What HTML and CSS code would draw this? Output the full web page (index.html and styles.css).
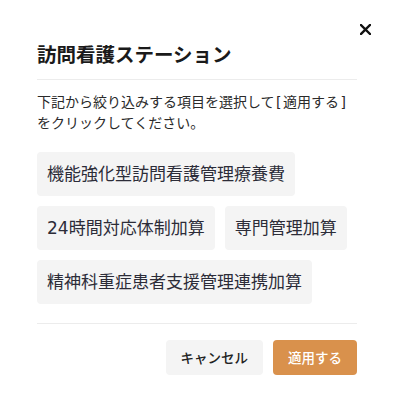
FILE: index.html
```html
<!DOCTYPE html>
<html lang="ja">
<head>
<meta charset="utf-8">
<link rel="stylesheet" href="styles.css">
</head>
<body>
<div class="modal">
  <button class="close" aria-label="閉じる">
    <svg width="11" height="11" viewBox="0 0 11 11"><path d="M1 1L10 10M10 1L1 10" stroke="#111" stroke-width="2.4" stroke-linecap="square"/></svg>
  </button>
  <h2 class="title">訪問看護ステーション</h2>
  <hr class="divider">
  <p class="desc">下記から絞り込みする項目を選択して<span class="br">[</span>適用する<span class="br">]</span><br>をクリックしてください。</p>
  <div class="chips">
    <span class="chip">機能強化型訪問看護管理療養費</span>
    <span class="chip">24時間対応体制加算</span>
    <span class="chip">専門管理加算</span>
    <span class="chip">精神科重症患者支援管理連携加算</span>
  </div>
  <hr class="divider bottom">
  <div class="actions">
    <button class="btn cancel">キャンセル</button>
    <button class="btn apply">適用する</button>
  </div>
</div>
</body>
</html>
```
FILE: styles.css
```css
html, body {
  margin: 0;
  padding: 0;
  background: #fff;
}
body {
  font-family: "Noto Sans CJK JP", "Noto Sans", sans-serif;
  color: #222;
}
.modal {
  position: relative;
  padding: 40px 36px 0 37px;
}
.close {
  position: absolute;
  top: 23px;
  right: 21px;
  width: 13px;
  height: 13px;
  padding: 1px;
  border: 0;
  background: none;
  display: flex;
  align-items: center;
  justify-content: center;
  cursor: pointer;
}
.title {
  margin: 0;
  font-size: 19.5px;
  line-height: 28px;
  font-weight: 700;
  color: #1a1a1a;
}
.divider {
  margin: 11px 0 0;
  border: 0;
  border-top: 1px solid #ececec;
  height: 0;
}
.desc {
  margin: 12px 0 0;
  font-family: "DejaVu Sans", "Noto Sans CJK JP", sans-serif;
  font-size: 14px;
  line-height: 21px;
  color: #2a2a2a;
}
.br {
  margin: 0 1.5px;
}
.chips {
  margin-top: 18px;
  display: flex;
  flex-wrap: wrap;
  gap: 10px;
}
.chip {
  background: #f4f4f4;
  border-radius: 4px;
  padding: 10px 10px;
  font-family: "DejaVu Sans", "Noto Sans CJK JP", sans-serif;
  font-size: 17px;
  line-height: 24px;
  color: #2c2c38;
}
.divider.bottom {
  margin-top: 19px;
}
.actions {
  margin-top: 16px;
  display: flex;
  justify-content: flex-end;
  gap: 10px;
}
.btn {
  font-family: "Noto Sans CJK JP", "Noto Sans", sans-serif;
  font-size: 13.5px;
  line-height: 21px;
  font-weight: 500;
  padding: 7px 15px;
  border: 0;
  border-radius: 4px;
  cursor: pointer;
}
.cancel {
  background: #f4f4f4;
  color: #222;
}
.apply {
  background: #d9914c;
  color: #fff;
}
```
